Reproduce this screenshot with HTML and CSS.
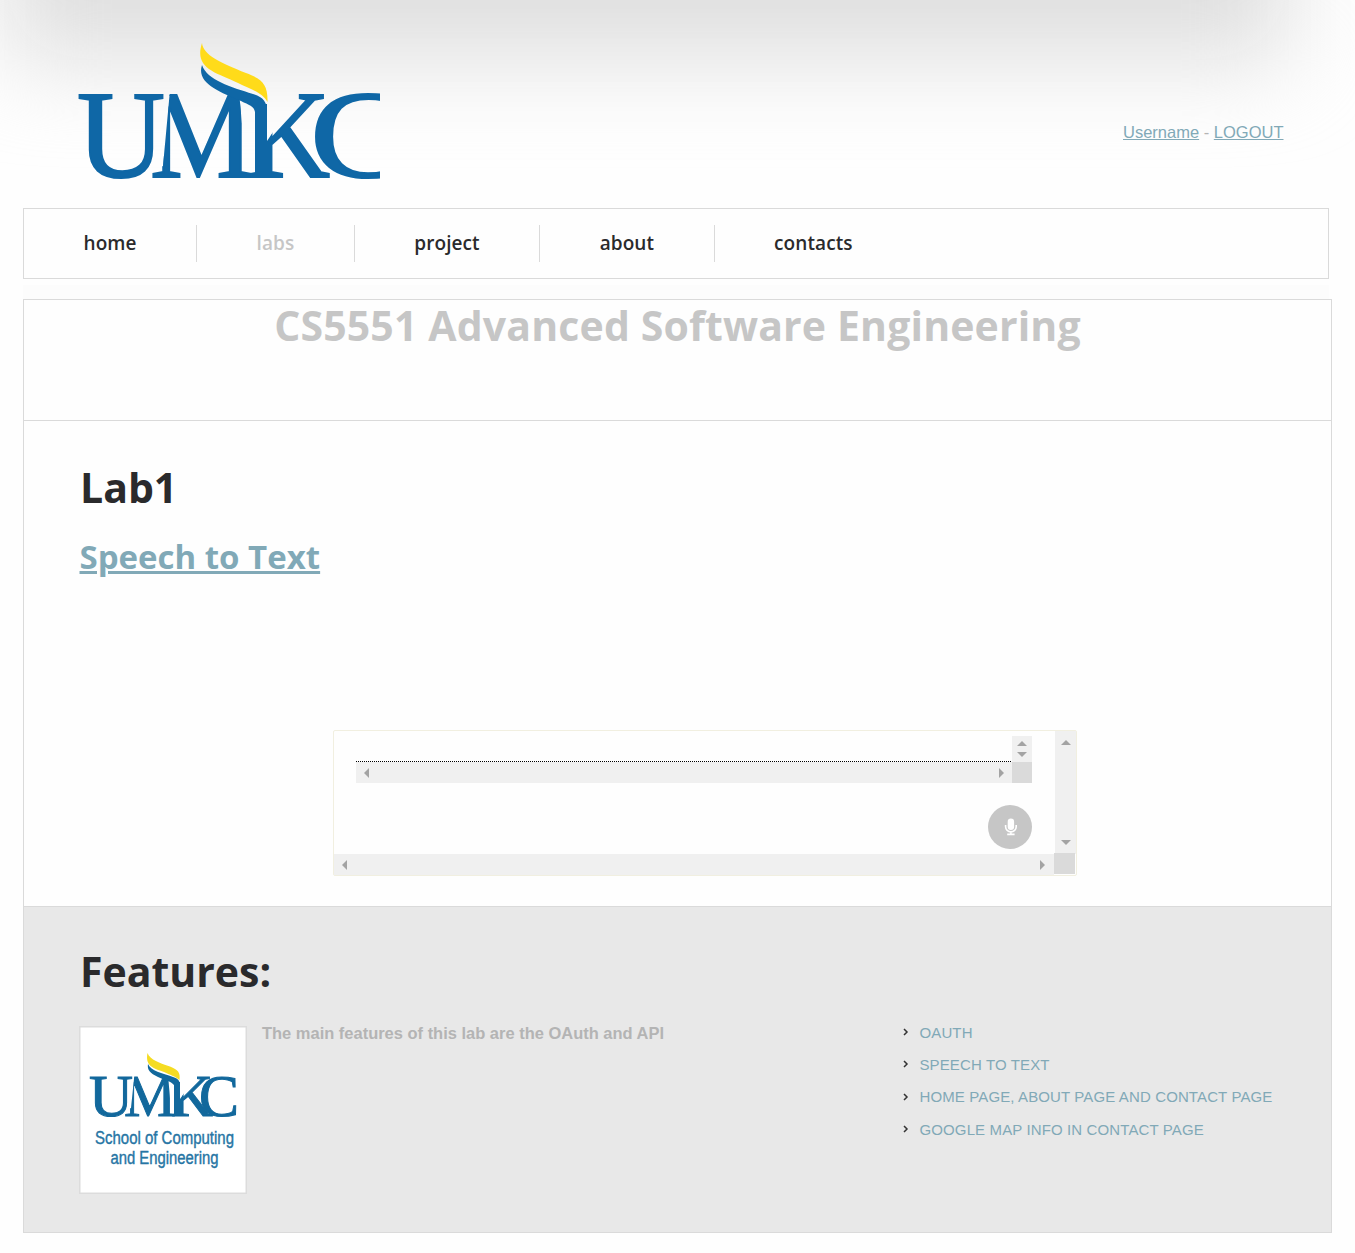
FILE: index.html
```html
<!DOCTYPE html>
<html lang="en">
<head>
<meta charset="utf-8">
<title>Labs</title>
<link rel="stylesheet" href="styles.css">
</head>
<body>
<header class="header">
  <svg class="logo" width="302" height="140" viewBox="78 40 302 140" role="img" aria-label="UMKC">
    <clipPath id="clip-m"><path d="M150 180V171L163 166L170 90H178L203 150L228 92H239L246 166L256 172V180Z"/></clipPath>
    <clipPath id="clip-k"><path d="M248 180V172L255 170V104H267V141L292 104V90H335V180Z"/></clipPath>
    <g class="logo-letters">
      <text x="77" y="177" textLength="88" lengthAdjust="spacingAndGlyphs">U</text>
      <g clip-path="url(#clip-m)"><text x="150" y="177" textLength="104" lengthAdjust="spacingAndGlyphs">M</text></g>
      <g clip-path="url(#clip-k)"><text x="248" y="177" textLength="82" lengthAdjust="spacingAndGlyphs">K</text></g>
      <text x="310" y="177" textLength="102" lengthAdjust="spacingAndGlyphs">C</text>
    </g>
    <path class="flame" d="M202 43C203 55 221 63 246 73C262 79 268 84 267.500 102C262 92 252 90 238 83C214 72 194 68 202 43Z"/>
    <path class="ribbon" d="M202 65C207 80 231 87 253 94C263 97 267 102 267 111V176H255V112C254 106 249 105 241 101C219 92 196 83 202 65Z"/>
  </svg>
  <p class="account"><a href="#">Username</a> - <a href="#">LOGOUT</a></p>
</header>
<nav class="nav">
  <a class="nav-item" href="#">home</a>
  <a class="nav-item active" href="#">labs</a>
  <a class="nav-item" href="#">project</a>
  <a class="nav-item" href="#">about</a>
  <a class="nav-item" href="#">contacts</a>
</nav>
<div class="strip"></div>
<main class="page">
  <h1 class="title">CS5551 Advanced Software Engineering</h1>
  <section class="lab">
    <h2>Lab1</h2>
    <h3><a href="#">Speech to Text</a></h3>
    <div class="widget">
      <div class="pane">
        <div class="result">
          <div class="line"></div>
          <div class="bar-v"><i class="up"></i><i class="down"></i></div>
          <div class="bar-h"><i class="left"></i><i class="right"></i></div>
          <div class="corner"></div>
        </div>
        <button class="mic" aria-label="Record">
          <svg width="14" height="18" viewBox="0 0 14 18"><rect x="3.700" y="0.500" width="6.400" height="11.500" rx="3.200" fill="#fff"/><path d="M1.600 7v1.800a5.300 5.100 0 0 0 10.600 0V7M6.900 14v2.400M3.200 16.400h7.400" fill="none" stroke="#fff" stroke-width="1.600"/></svg>
        </button>
      </div>
      <div class="bar-v"><i class="up"></i><i class="down"></i></div>
      <div class="bar-h"><i class="left"></i><i class="right"></i></div>
      <div class="corner"></div>
    </div>
  </section>
  <section class="features">
    <h2>Features:</h2>
    <div class="feature-row">
      <svg class="badge" width="168" height="168" viewBox="79 1026 168 168" role="img">
        <clipPath id="clip-m-small"><path d="M124 1118V1112L131 1108L134.500 1074H139L150 1102L162 1075H168L171 1110L176 1113V1118Z"/></clipPath>
        <clipPath id="clip-k-small"><path d="M170 1118V1113L174 1110V1082H180V1099L192 1082V1074H214V1118Z"/></clipPath>
        <rect x="79.750" y="1026.750" width="166.500" height="166.500" fill="#fff" stroke="#dcdcdc" stroke-width="1.500"/>
        <g class="badge-letters">
          <text x="89" y="1116" textLength="44" lengthAdjust="spacingAndGlyphs">U</text>
          <g clip-path="url(#clip-m-small)"><text x="124" y="1116" textLength="52" lengthAdjust="spacingAndGlyphs">M</text></g>
          <g clip-path="url(#clip-k-small)"><text x="171" y="1116" textLength="42" lengthAdjust="spacingAndGlyphs">K</text></g>
          <text x="199" y="1116" textLength="40" lengthAdjust="spacingAndGlyphs">C</text>
        </g>
        <path fill="#f5dc22" d="M147.500 1053C150 1060 160 1063 170 1066.500C178 1070 180.500 1072 179.500 1080C175 1076 170 1075 164 1072C153 1068 145 1066 147.500 1053Z"/>
        <path fill="#12689c" d="M148 1064C151 1071 162 1073 173 1077C179 1079 180 1081 180 1087V1115H174V1085C171 1081 164 1080 158 1077C150 1073 147 1070 148 1064Z"/>
        <g class="badge-caption">
          <text x="95" y="1144" textLength="139" lengthAdjust="spacingAndGlyphs">School of Computing</text>
          <text x="110.500" y="1164" textLength="108" lengthAdjust="spacingAndGlyphs">and Engineering</text>
        </g>
      </svg>
      <p class="summary">The main features of this lab are the OAuth and API</p>
      <ul class="links">
        <li><svg width="6" height="8" viewBox="0 0 6 8"><path d="M1 1l3 3-3 3"/></svg><a href="#">OAUTH</a></li>
        <li><svg width="6" height="8" viewBox="0 0 6 8"><path d="M1 1l3 3-3 3"/></svg><a href="#">SPEECH TO TEXT</a></li>
        <li><svg width="6" height="8" viewBox="0 0 6 8"><path d="M1 1l3 3-3 3"/></svg><a href="#">HOME PAGE, ABOUT PAGE AND CONTACT PAGE</a></li>
        <li><svg width="6" height="8" viewBox="0 0 6 8"><path d="M1 1l3 3-3 3"/></svg><a href="#">GOOGLE MAP INFO IN CONTACT PAGE</a></li>
      </ul>
    </div>
  </section>
</main>
</body>
</html>
```
FILE: styles.css
```css
* { box-sizing: border-box; }
body {
  margin: 0;
  padding: 0 23px 20px;
  min-height: 1253px;
  color: #b4b4b4;
  font-family: "Liberation Sans", Arial, sans-serif;
  background: #fefefe;
}
/* soft shade behind the header */
body::before {
  content: "";
  position: absolute;
  z-index: -1;
  top: -200px;
  left: 4px;
  width: 1285px;
  height: 260px;
  background: #dfdfdf;
  filter: blur(45px);
}
a { color: #81a9b7; }
h1, h2, h3, p, ul { margin: 0; }
h1, h2, h3, .nav { font-family: "Open Sans", sans-serif; }

.header {
  display: flex;
  justify-content: space-between;
  height: 208px;
  padding: 40px 48.500px 0 55px;
}
.logo { display: block; overflow: hidden; }
.logo-letters { font: 124px "Liberation Serif", serif; fill: #0f67a6; stroke: #0f67a6; stroke-width: 2px; }
.flame { fill: #ffdb1a; }
.ribbon { fill: #0f67a6; }
.account { padding-top: 82px; font-size: 16.500px; line-height: 20px; }

.nav {
  display: flex;
  align-items: center;
  width: 1306px;
  height: 71px;
  border: 1px solid #dadada;
  background: #fefefe;
}
.nav-item {
  height: 37px;
  padding: 0 59.500px;
  border-right: 1px solid #dadada;
  color: #2a2a2c;
  font-size: 19px;
  font-weight: 600;
  letter-spacing: .08px;
  line-height: 37px;
  text-decoration: none;
}
.nav-item:last-child { border: 0; }
.nav-item.active { color: #c6c6c6; }
.strip { width: 1306px; height: 14px; margin-top: 6px; background: #fcfcfc; }

.page { width: 1309px; border: 1px solid #dadada; background: #fefefe; }
.title {
  height: 121px;
  border-bottom: 1px solid #dadada;
  color: #c6c6c6;
  font-size: 41px;
  letter-spacing: .14px;
  line-height: 51px;
  text-align: center;
}
h2 { color: #2a2a2c; font-size: 41px; line-height: 52px; }
h3 { margin: 22px 0 0 -.5px; font-size: 33px; line-height: 44px; }
.lab { height: 486px; padding: 40px 56px 0; border-bottom: 1px solid #dadada; }

.widget {
  display: grid;
  grid-template: 123px 21px / 720px 22px;
  width: 744px;
  height: 146px;
  margin: 151px 0 0 253px;
  border: 1px solid #f1efe0;
  border-radius: 2px;
}
.pane { padding: 5px 22px 0; }
.result { display: grid; grid-template: 26px 21px / 656px 20px; }
.line { margin-right: 1px; border-bottom: 1px dotted #000; }
.bar-v, .bar-h { display: flex; justify-content: space-between; align-items: center; background: #f0f0f0; }
.bar-v { flex-direction: column; padding: 9px 0 9px; }
.bar-h { padding: 0 9px 0 8px; }
.widget > .bar-v { margin-left: 1px; }
.result .bar-v { padding: 5px 0; }
.result .bar-h { padding-right: 8px; }
.corner { background: #dadada; }
.widget > .corner { width: 21px; height: 21px; margin-top: -1px; }
.up, .down { border: solid transparent; border-width: 0 5px 5px; border-bottom-color: #a3a3a3; }
.down { border-width: 5px 5px 0; border-top-color: #a3a3a3; }
.left, .right { border: solid transparent; border-width: 5px 5px 5px 0; border-right-color: #a3a3a3; }
.right { border-width: 5px 0 5px 5px; border-left-color: #a3a3a3; }
.mic {
  display: flex;
  align-items: center;
  justify-content: center;
  width: 44px;
  height: 44px;
  margin: 22px 0 0 632px;
  padding: 0 0 1px 2px;
  border: 0;
  border-radius: 50%;
  background: #c6c6c6;
}

.features { height: 325px; padding: 38px 55px 0; background: #e8e8e8; }
.features h2 { padding-left: 1px; }
.feature-row { display: flex; align-items: flex-start; margin-top: 29px; }
.badge-letters { font: 59px "Liberation Serif", serif; fill: #12689c; stroke: #12689c; stroke-width: 1px; }
.badge-caption { font: 18px "Liberation Sans Narrow", "Liberation Sans", sans-serif; fill: #2675a4; stroke: #2675a4; stroke-width: .4px; }
.summary { width: 641px; margin-left: 15px; font-size: 16.480px; font-weight: bold; line-height: 15px; }
.links { padding: 0; list-style: none; font-size: 15px; letter-spacing: .12px; }
.links li { display: flex; align-items: center; height: 32.300px; margin-top: -10px; margin-bottom: 10px; }
.links svg { margin-right: 10.500px; fill: none; stroke: #333; stroke-width: 1.500px; }
.links a { text-decoration: none; }
```
